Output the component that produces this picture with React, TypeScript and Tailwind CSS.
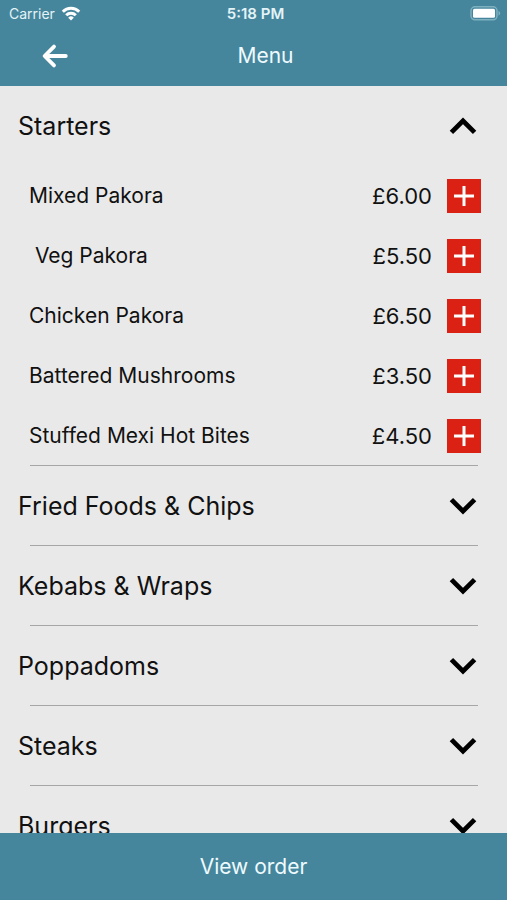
import React, { useState } from "react";

interface MenuItem {
  name: string;
  price: string;
}

interface MenuSection {
  title: string;
  items: MenuItem[];
}

const sections: MenuSection[] = [
  {
    title: "Starters",
    items: [
      { name: "Mixed Pakora", price: "£6.00" },
      { name: " Veg Pakora", price: "£5.50" },
      { name: "Chicken Pakora", price: "£6.50" },
      { name: "Battered Mushrooms", price: "£3.50" },
      { name: "Stuffed Mexi Hot Bites", price: "£4.50" }
    ]
  },
  { title: "Fried Foods & Chips", items: [] },
  { title: "Kebabs & Wraps", items: [] },
  { title: "Poppadoms", items: [] },
  { title: "Steaks", items: [] },
  { title: "Burgers", items: [] }
];

function StatusBar() {
  return (
    <div className="grid grid-cols-3 items-center h-7 pl-[9px] pr-[5px] text-sm text-[#e4f3f8]">
      <div className="flex items-center gap-1.5">
        <span>Carrier</span>
        <svg className="w-5 h-4" viewBox="0 0 20 16" fill="none" stroke="#fff" strokeWidth="3">
          <path d="M1.8 5.7 A11.6 11.6 0 0 1 18.2 5.7" />
          <path d="M5.2 9.3 A6.8 6.8 0 0 1 14.8 9.3" />
          <path d="M10 14.5 L7.2 11.7 A4 4 0 0 1 12.8 11.7 Z" fill="#fff" stroke="none" />
        </svg>
      </div>
      <span className="text-center text-[15px] font-semibold">5:18 PM</span>
      <svg className="w-8 h-4 justify-self-end" viewBox="0 0 32 16" fill="none">
        <rect x="1" y="0.8" width="26" height="13" rx="4" stroke="#7fb0c0" strokeWidth="1.5" />
        <rect x="3" y="2.8" width="22" height="9" rx="1.5" fill="#fff" />
        <path d="M28.5 4.8 Q32 7.3 28.5 9.8 Z" fill="#7fb0c0" />
      </svg>
    </div>
  );
}

function Chevron({ open }: { open: boolean }) {
  return (
    <svg
      className={`w-7 h-[18px] ${open ? "rotate-180" : ""}`}
      viewBox="0 0 28 18"
      fill="none"
      stroke="#000"
      strokeWidth="4.8"
    >
      <path d="M2.4 2.6 L14 14.1 L25.6 2.6" />
    </svg>
  );
}

export default function App() {
  const [openSection, setOpenSection] = useState("Starters");
  const [order, setOrder] = useState<string[]>([]);

  return (
    <div className="h-screen flex flex-col bg-[#e9e9e9] text-[#111] font-['Inter',sans-serif]">
      <header className="shrink-0 bg-[#45869c] text-[#eefaff]">
        <StatusBar />
        <div className="flex items-center h-14 mb-0.5 pl-10 pr-11">
          <button aria-label="Back">
            <svg
              className="w-7 h-7"
              viewBox="0 0 28 28"
              fill="none"
              stroke="#fff"
              strokeWidth="3.8"
              strokeLinecap="round"
              strokeLinejoin="round"
            >
              <path d="M14 4.6 L4.6 14 L14 23.4 M5 14 H25.8" />
            </svg>
          </button>
          <h1 className="flex-1 text-center text-[21px]">Menu</h1>
        </div>
      </header>

      <main className="flex-1 min-h-0 overflow-y-auto [scrollbar-width:none]">
        {sections.map((section) => {
          const open = openSection === section.title;
          return (
            <section key={section.title}>
              <button
                onClick={() => setOpenSection(open ? "" : section.title)}
                aria-expanded={open}
                className="w-full h-20 flex items-center justify-between pl-[18px] pr-[30px] text-left text-[25px]"
              >
                <span className="pt-0.5">{section.title}</span>
                <Chevron open={open} />
              </button>

              {open && (
                <ul>
                  {section.items.map((item) => (
                    <li key={item.name} className="h-[60px] flex items-center pl-[29px] pr-[26px]">
                      <span className="flex-1 whitespace-pre text-[21px]">{item.name}</span>
                      <span className="mr-[15px] text-[22px]">{item.price}</span>
                      <button
                        onClick={() => setOrder([...order, item.name])}
                        aria-label={`Add ${item.name.trim()}`}
                        className="w-[34px] h-[34px] flex items-center justify-center bg-[#db2114]"
                      >
                        <svg className="w-5 h-5" viewBox="0 0 20 20" stroke="#fff" strokeWidth="3">
                          <path d="M10 0 V20 M0 10 H20" />
                        </svg>
                      </button>
                    </li>
                  ))}
                </ul>
              )}

              <hr className="-mt-px ml-[30px] mr-[29px] border-t border-[#a6a6a6]" />
            </section>
          );
        })}
      </main>

      <button className="shrink-0 h-[67px] bg-[#45869c] text-[21px] text-[#eefaff]">View order</button>
    </div>
  );
}
